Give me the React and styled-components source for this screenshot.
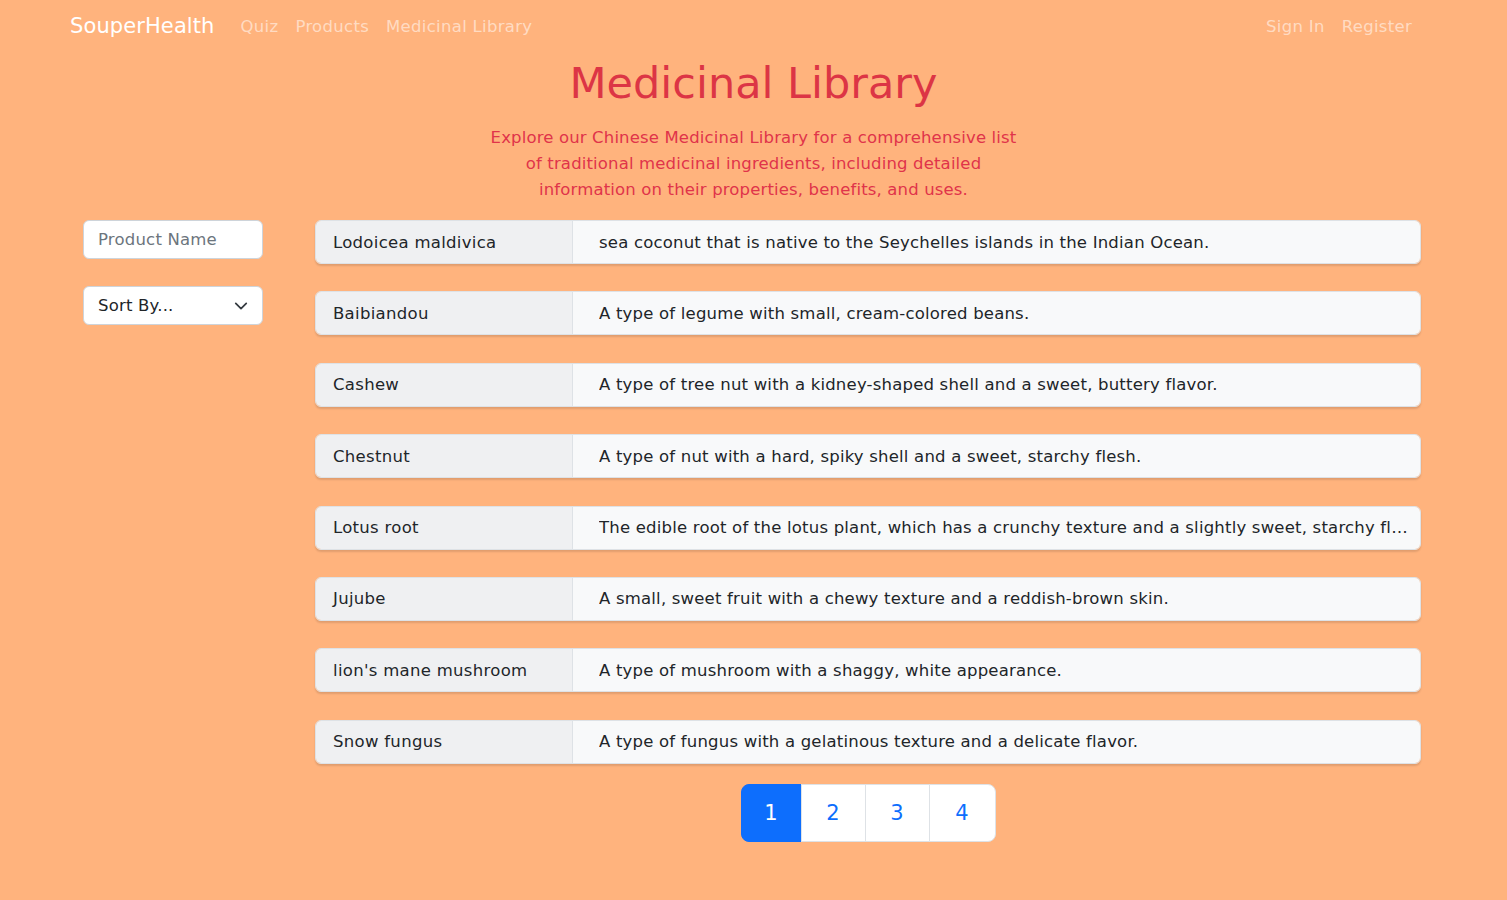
import React from "react";
import styled, { createGlobalStyle } from "styled-components";

const Global = createGlobalStyle`
  html, body {
    margin: 0;
    padding: 0;
    background: #ffb37d;
    font-family: "DejaVu Sans", "Open Sans", sans-serif;
  }
  * { box-sizing: border-box; }
`;

const Page = styled.div`
  min-height: 900px;
  background: #ffb37d;
`;

const Nav = styled.nav`
  display: flex;
  align-items: center;
  height: 52px;
  padding: 0 95px 0 70px;
`;

const Brand = styled.a`
  font-size: 21px;
  color: #fff;
  margin-right: 26px;
  letter-spacing: 0.1px;
`;

const NavLinks = styled.div`
  display: flex;
  gap: 17px;
  margin-left: ${(p) => (p.$right ? "auto" : "0")};
`;

const NavLink = styled.a`
  font-size: 16.5px;
  color: rgba(255, 255, 255, 0.55);
  letter-spacing: 0.3px;
`;

const Header = styled.header`
  text-align: center;
  padding-top: 3px;
`;

const Title = styled.h1`
  margin: 0;
  font-size: 43px;
  font-weight: 500;
  line-height: 56px;
  color: #dc3545;
`;

const Lead = styled.p`
  margin: 14px 0 0;
  font-size: 16.5px;
  line-height: 26px;
  color: #e0344a;
  letter-spacing: 0.15px;
`;

const Body = styled.div`
  display: flex;
  gap: 52px;
  padding: 17px 0 0 83px;
`;

const Side = styled.aside`
  width: 180px;
  display: flex;
  flex-direction: column;
  gap: 27px;
`;

const Field = styled.div`
  height: 39px;
  display: flex;
  align-items: center;
  justify-content: space-between;
  padding: 0 14px;
  background: #fff;
  border: 1px solid #ced4da;
  border-radius: 6px;
  font-size: 16.5px;
  letter-spacing: 0.2px;
  color: ${(p) => (p.$muted ? "#6c757d" : "#212529")};
`;

const Main = styled.main`
  width: 1106px;
  display: flex;
  flex-direction: column;
  gap: 27.4px;
`;

const Row = styled.div`
  display: flex;
  height: 44px;
  border: 1px solid #dee2e6;
  border-radius: 6px;
  overflow: hidden;
  box-shadow: 0 2px 2px rgba(0, 0, 0, 0.12);
`;

const Label = styled.div`
  width: 257px;
  flex-shrink: 0;
  display: flex;
  align-items: center;
  padding-left: 17px;
  background: #eff0f2;
  border-right: 1px solid #dee2e6;
  font-size: 16.5px;
  color: #212529;
  letter-spacing: 0.3px;
`;

const Value = styled.div`
  flex: 1;
  min-width: 0;
  display: flex;
  align-items: center;
  padding: 0 4px 0 26px;
  background: #f8f9fa;
  font-size: 16.5px;
  color: #212529;
  letter-spacing: 0.2px;

  span {
    white-space: nowrap;
    overflow: hidden;
    text-overflow: ellipsis;
  }
`;

const Pager = styled.ul`
  display: flex;
  justify-content: center;
  list-style: none;
  margin: -7px 0 0;
  padding: 0;
`;

const PageItem = styled.li`
  width: ${(p) => (p.$first ? "61px" : p.$last ? "67px" : "65px")};
  height: 58px;
  display: flex;
  align-items: center;
  justify-content: center;
  font-size: 21px;
  background: ${(p) => (p.$active ? "#0d6efd" : "#fff")};
  color: ${(p) => (p.$active ? "#fff" : "#0d6efd")};
  border: 1px solid ${(p) => (p.$active ? "#0d6efd" : "#dee2e6")};
  margin-left: ${(p) => (p.$first ? "0" : "-1px")};
  border-radius: ${(p) =>
    p.$first ? "8px 0 0 8px" : p.$last ? "0 8px 8px 0" : "0"};
`;

const Chevron = () => (
  <svg width="14" height="14" viewBox="0 0 16 16" fill="none">
    <path
      d="M2 5l6 6 6-6"
      stroke="#343a40"
      strokeWidth="2"
      strokeLinecap="round"
      strokeLinejoin="round"
    />
  </svg>
);

const items = [
  ["Lodoicea maldivica", "sea coconut that is native to the Seychelles islands in the Indian Ocean."],
  ["Baibiandou", "A type of legume with small, cream-colored beans."],
  ["Cashew", "A type of tree nut with a kidney-shaped shell and a sweet, buttery flavor."],
  ["Chestnut", "A type of nut with a hard, spiky shell and a sweet, starchy flesh."],
  ["Lotus root", "The edible root of the lotus plant, which has a crunchy texture and a slightly sweet, starchy flavor."],
  ["Jujube", "A small, sweet fruit with a chewy texture and a reddish-brown skin."],
  ["lion's mane mushroom", "A type of mushroom with a shaggy, white appearance."],
  ["Snow fungus", "A type of fungus with a gelatinous texture and a delicate flavor."],
];

export default function App() {
  return (
    <Page>
      <Global />
      <Nav>
        <Brand>SouperHealth</Brand>
        <NavLinks>
          <NavLink>Quiz</NavLink>
          <NavLink>Products</NavLink>
          <NavLink>Medicinal Library</NavLink>
        </NavLinks>
        <NavLinks $right>
          <NavLink>Sign In</NavLink>
          <NavLink>Register</NavLink>
        </NavLinks>
      </Nav>
      <Header>
        <Title>Medicinal Library</Title>
        <Lead>
          Explore our Chinese Medicinal Library for a comprehensive list
          <br />
          of traditional medicinal ingredients, including detailed
          <br />
          information on their properties, benefits, and uses.
        </Lead>
      </Header>
      <Body>
        <Side>
          <Field $muted>Product Name</Field>
          <Field>
            Sort By...
            <Chevron />
          </Field>
        </Side>
        <Main>
          {items.map(([name, desc]) => (
            <Row key={name}>
              <Label>{name}</Label>
              <Value>
                <span>{desc}</span>
              </Value>
            </Row>
          ))}
          <Pager>
            {[1, 2, 3, 4].map((n) => (
              <PageItem key={n} $active={n === 1} $first={n === 1} $last={n === 4}>
                {n}
              </PageItem>
            ))}
          </Pager>
        </Main>
      </Body>
    </Page>
  );
}
